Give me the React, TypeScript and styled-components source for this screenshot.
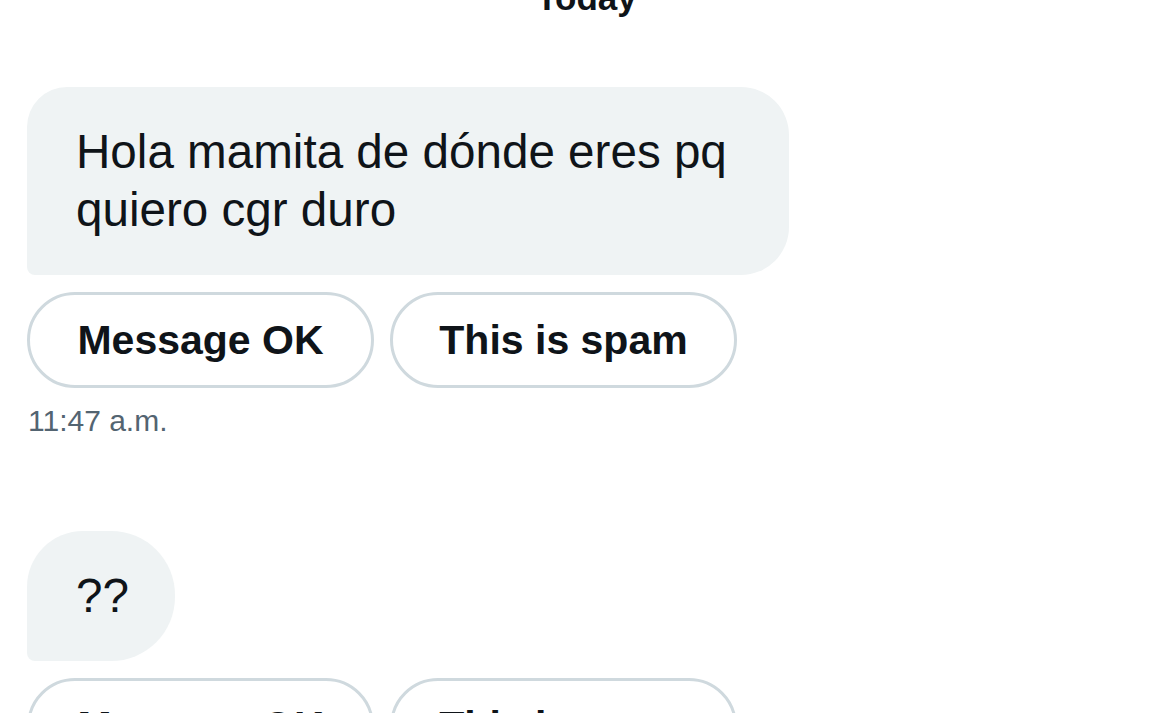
import React from "react";
import styled, { createGlobalStyle } from "styled-components";

const GlobalStyle = createGlobalStyle`
  html, body {
    margin: 0;
    padding: 0;
    background: #ffffff;
    overflow: hidden;
  }
  body {
    font-family: "Liberation Sans", Arial, sans-serif;
    color: #0f1419;
  }
`;

const Page = styled.main`
  width: 1169px;
  height: 713px;
  box-sizing: border-box;
  padding: 0 27px;
  overflow: hidden;
  display: flex;
  flex-direction: column;
`;

const DayHeader = styled.div`
  margin-top: -20px;
  margin-bottom: 72px;
  text-align: center;
  font-size: 35px;
  line-height: 35px;
  font-weight: 700;
  color: #0f1419;
  padding-left: 4px;
`;

const MessageGroup = styled.section<{ $gapAfter?: number }>`
  display: flex;
  flex-direction: column;
  align-items: flex-start;
  margin-bottom: ${(p) => p.$gapAfter ?? 0}px;
`;

const Bubble = styled.div<{ $radius: number }>`
  box-sizing: border-box;
  max-width: 762px;
  padding: 36px 46px 36px 49px;
  background: #eff3f4;
  border-radius: ${(p) => p.$radius}px ${(p) => p.$radius + 8}px
    ${(p) => p.$radius + 8}px 8px;
  font-size: 47.6px;
  line-height: 58px;
  color: #0f1419;
`;

const ActionRow = styled.div`
  display: flex;
  gap: 16px;
  margin-top: 17px;
`;

const ActionButton = styled.button`
  box-sizing: border-box;
  width: 347px;
  height: 96px;
  display: flex;
  align-items: center;
  justify-content: center;
  padding: 0;
  background: #ffffff;
  border: 3px solid #cfd9de;
  border-radius: 48px;
  font-family: "Liberation Sans", Arial, sans-serif;
  font-size: 41px;
  font-weight: 700;
  color: #0f1419;
  cursor: pointer;
`;

const Timestamp = styled.div`
  margin-top: 15px;
  margin-left: 1px;
  font-size: 30px;
  line-height: 36px;
  color: #536471;
`;

export default function App() {
  return (
    <>
      <GlobalStyle />
      <Page>
        <DayHeader>Today</DayHeader>
        <MessageGroup $gapAfter={92}>
          <Bubble $radius={40}>Hola mamita de dónde eres pq quiero cgr duro</Bubble>
          <ActionRow>
            <ActionButton>Message OK</ActionButton>
            <ActionButton>This is spam</ActionButton>
          </ActionRow>
          <Timestamp>11:47 a.m.</Timestamp>
        </MessageGroup>
        <MessageGroup>
          <Bubble $radius={56}>??</Bubble>
          <ActionRow>
            <ActionButton>Message OK</ActionButton>
            <ActionButton>This is spam</ActionButton>
          </ActionRow>
        </MessageGroup>
      </Page>
    </>
  );
}
